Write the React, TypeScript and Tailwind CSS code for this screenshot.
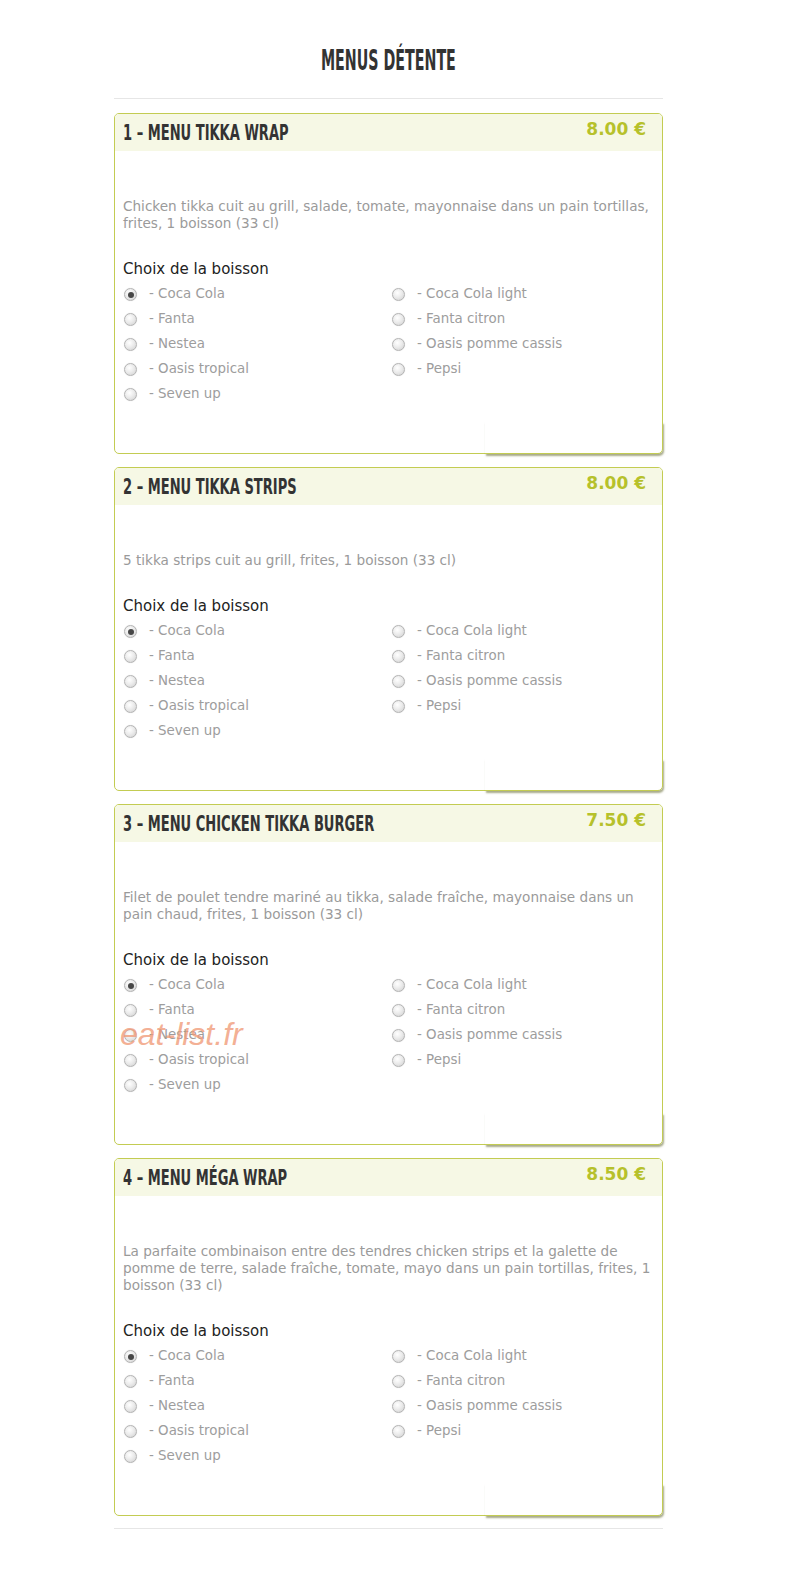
import React from "react"

type Menu = {
  id: number
  name: string
  price: string
  desc: string
}

const menus: Menu[] = [
  {
    id: 1,
    name: "MENU TIKKA WRAP",
    price: "8.00 €",
    desc: "Chicken tikka cuit au grill, salade, tomate, mayonnaise dans un pain tortillas, frites, 1 boisson (33 cl)",
  },
  {
    id: 2,
    name: "MENU TIKKA STRIPS",
    price: "8.00 €",
    desc: "5 tikka strips cuit au grill, frites, 1 boisson (33 cl)",
  },
  {
    id: 3,
    name: "MENU CHICKEN TIKKA BURGER",
    price: "7.50 €",
    desc: "Filet de poulet tendre mariné au tikka, salade fraîche, mayonnaise dans un pain chaud, frites, 1 boisson (33 cl)",
  },
  {
    id: 4,
    name: "MENU MÉGA WRAP",
    price: "8.50 €",
    desc: "La parfaite combinaison entre des tendres chicken strips et la galette de pomme de terre, salade fraîche, tomate, mayo dans un pain tortillas, frites, 1 boisson (33 cl)",
  },
]

// row by row: left column, right column
const drinks = [
  "Coca Cola",
  "Coca Cola light",
  "Fanta",
  "Fanta citron",
  "Nestea",
  "Oasis pomme cassis",
  "Oasis tropical",
  "Pepsi",
  "Seven up",
]

const Radio: React.FC<{ checked?: boolean }> = ({ checked }) => (
  <span className="flex items-center justify-center w-[13px] h-[13px] rounded-full border border-[#b4b4b4] bg-[radial-gradient(circle_at_40%_35%,#ffffff_0%,#ececec_45%,#cfcfcf_100%)] shadow-[0_0_1px_rgba(0,0,0,0.15)]">
    {checked && <span className="w-[6px] h-[6px] rounded-full bg-[#474747]" />}
  </span>
)

const MenuCard: React.FC<{ menu: Menu; watermark?: boolean }> = ({ menu, watermark }) => {
  const [choice, setChoice] = React.useState(0)

  return (
    <div className="relative rounded-[5px] border border-[#c3cc52] bg-white">
      {/* header band */}
      <div className="flex justify-between h-[37px] pl-[8px] pr-[16px] bg-[#f6f8e5] rounded-t-[4px]">
        <span className="inline-block origin-left scale-x-[0.66] whitespace-nowrap leading-[37px] text-[22px] font-bold text-[#333] font-['DejaVu_Sans_Condensed',sans-serif]">
          {menu.id} – {menu.name}
        </span>
        <span className="mt-[5px] leading-[20px] text-[17px] font-bold text-[#b6c12b] font-['DejaVu_Sans',sans-serif]">
          {menu.price}
        </span>
      </div>

      <div className="pl-[8px] pr-[6px] pb-[46px] font-['DejaVu_Sans',sans-serif]">
        <p className="mt-[47px] text-[13.6px] leading-[17px] text-[#9a9a9a]">{menu.desc}</p>

        <div className="mt-[27px] text-[15px] leading-[20px] text-[#222]">Choix de la boisson</div>

        <div className="mt-[3px] grid grid-cols-[268px_1fr]">
          {drinks.map((d, i) => (
            <label
              key={d}
              onClick={() => setChoice(i)}
              className="flex items-center h-[25px] pl-[1px] gap-[12px] cursor-pointer text-[13.4px] text-[#9d9d9d]"
            >
              <Radio checked={choice === i} />
              <span>- {d}</span>
            </label>
          ))}
        </div>
      </div>

      {/* drop shadow under the bottom right corner */}
      <div className="absolute right-[-1px] bottom-[-1px] w-[178px] h-[32px] rounded-br-[5px] shadow-[1px_2px_2px_rgba(95,100,40,0.55)]" />

      {watermark && (
        <span className="absolute left-[5px] top-[213px] leading-none italic text-[32px] text-[#f09a78]/80 font-['Liberation_Sans',sans-serif] pointer-events-none">
          eat-list.fr
        </span>
      )}
    </div>
  )
}

export default function App() {
  return (
    <div className="min-h-[1586px] bg-white">
      <div className="ml-[114px] w-[549px] pt-[45px]">
        <h1 className="text-center leading-[32px]">
          <span className="inline-block scale-x-[0.565] text-[28px] font-bold text-[#333] font-['DejaVu_Sans_Condensed',sans-serif] whitespace-nowrap">
            MENUS DÉTENTE
          </span>
        </h1>
        <div className="mt-[18px] border-t border-[#e6e6e6]" />

        <div className="mt-[14px] flex flex-col gap-[13px]">
          {menus.map((m) => (
            <MenuCard key={m.id} menu={m} watermark={m.id === 3} />
          ))}
        </div>

        <div className="mt-[12px] border-t border-[#e6e6e6]" />
      </div>
    </div>
  )
}
